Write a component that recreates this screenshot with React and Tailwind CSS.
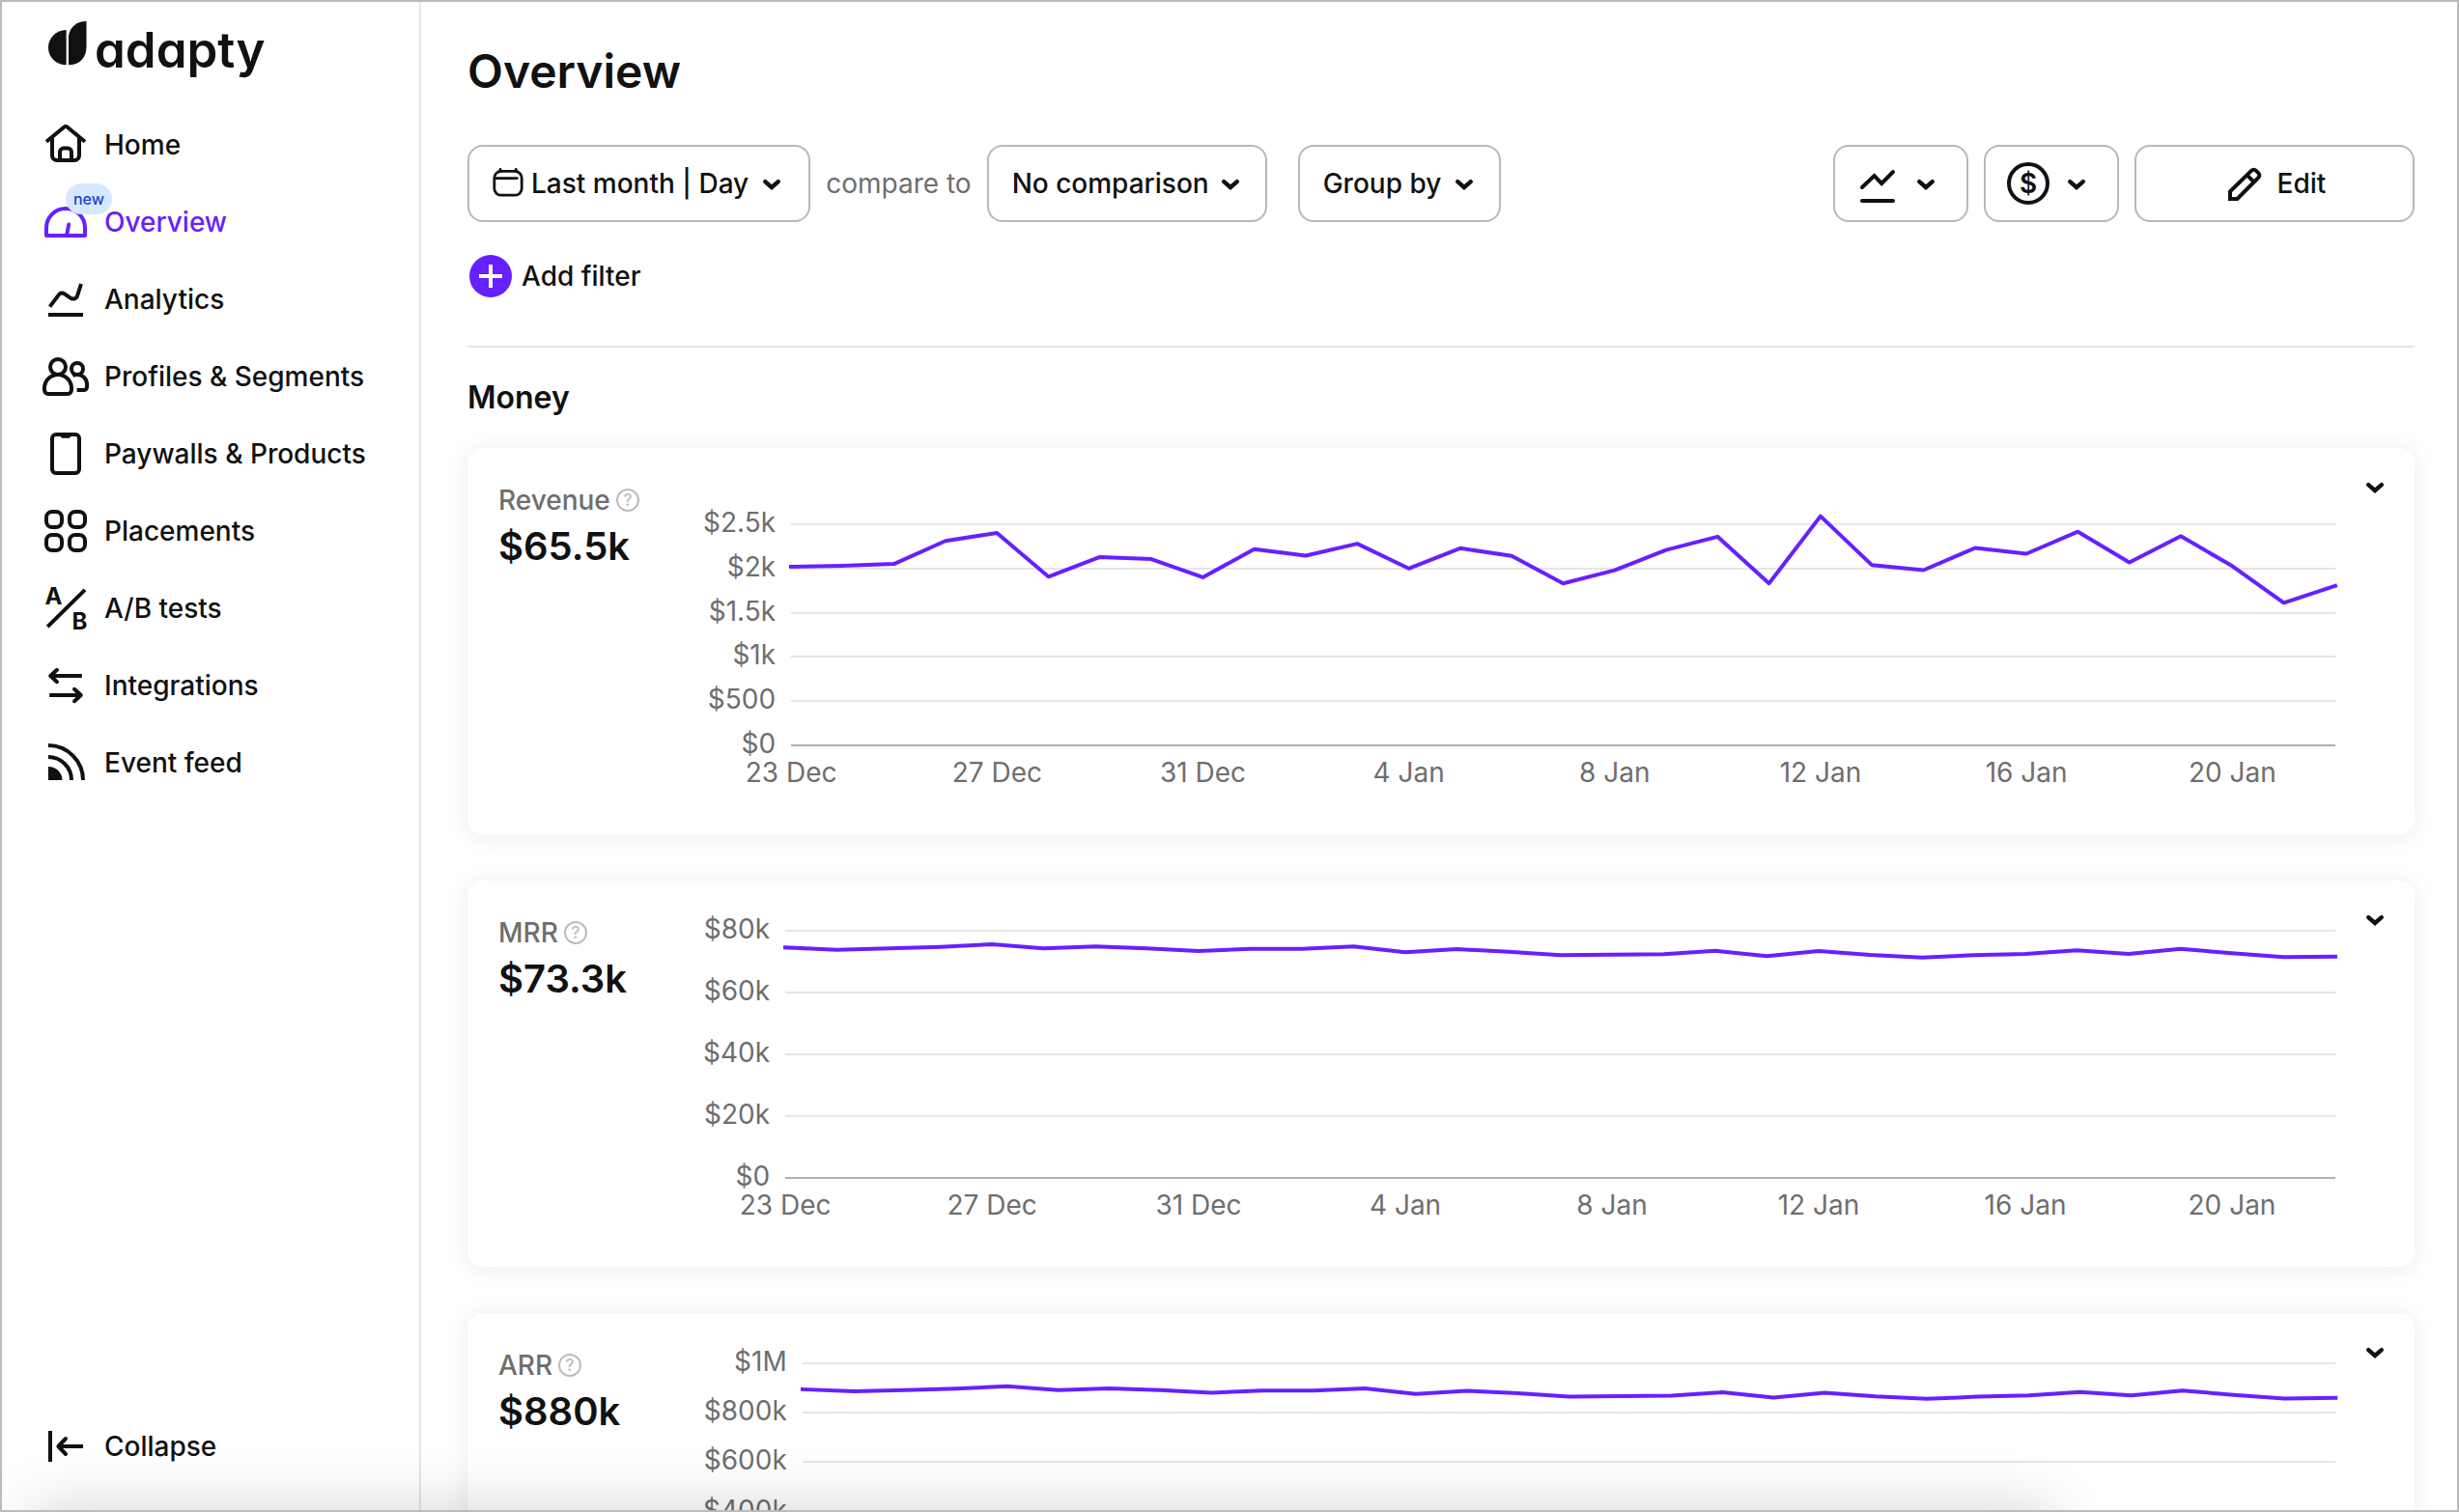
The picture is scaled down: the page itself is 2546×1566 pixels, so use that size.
const stroke = {
  fill: 'none',
  stroke: 'currentColor',
  strokeWidth: 2,
};

function NavIcon({ children }) {
  return (
    <svg viewBox="0 0 24 24" className="size-12 shrink-0 overflow-visible" aria-hidden="true" {...stroke}>
      {children}
    </svg>
  );
}

function HomeIcon() {
  return (
    <NavIcon>
      <path d="M2 10.4 11.1 2.9a1.4 1.4 0 0 1 1.8 0L22 10.4" />
      <path d="M5 8.5v9A2.5 2.5 0 0 0 7.5 20h9a2.5 2.5 0 0 0 2.5-2.5v-9" />
      <path d="M9 20v-4.2a2 2 0 0 1 2-2h2a2 2 0 0 1 2 2V20" />
    </NavIcon>
  );
}

function OverviewIcon() {
  return (
    <NavIcon>
      <path d="M2 19v-4a10 10 0 0 1 20 0v4z" strokeLinejoin="round" />
      <path d="M12.5 19 13.6 13.2" strokeLinecap="round" />
    </NavIcon>
  );
}

function AnalyticsIcon() {
  return (
    <NavIcon>
      <path d="M3.8 15.8 8.3 9.8c.8-1.1 2-1.4 3.1-.6l2.9 2c1.5 1.1 3.3.6 3.8-1.2L20 4" />
      <path d="M3 20h18" />
    </NavIcon>
  );
}

function ProfilesIcon() {
  return (
    <NavIcon>
      <circle cx="8" cy="7" r="4" />
      <path d="M1 19v-1a7 7 0 0 1 7-7 7 7 0 0 1 7 7v1a2 2 0 0 1-2 2H3a2 2 0 0 1-2-2z" />
      <circle cx="18" cy="8" r="3" />
      <path d="M15.6 11.5c.7-.4 1.6-.5 2.4-.5a5 5 0 0 1 5 5v1.4a1.6 1.6 0 0 1-1.6 1.6h-3.6" />
    </NavIcon>
  );
}

function PaywallsIcon() {
  return (
    <NavIcon>
      <rect x="5" y="2" width="14" height="20" rx="2" />
      <path d="M9.2 2.8h5.6l-.8 1.1h-4z" fill="currentColor" stroke="none" />
    </NavIcon>
  );
}

function PlacementsIcon() {
  return (
    <NavIcon>
      <rect x="2" y="2" width="8" height="8" rx="3" />
      <rect x="14" y="2" width="8" height="8" rx="3" />
      <rect x="2" y="14" width="8" height="8" rx="3" />
      <rect x="14" y="14" width="8" height="8" rx="3" />
    </NavIcon>
  );
}

function AbTestsIcon() {
  return (
    <NavIcon>
      <path d="M2.6 21.6 22 2.4" />
      <text x="1.2" y="10" fontSize="12" fontWeight="700" fill="currentColor" stroke="none">A</text>
      <text x="15.2" y="23" fontSize="12" fontWeight="700" fill="currentColor" stroke="none">B</text>
    </NavIcon>
  );
}

function IntegrationsIcon() {
  return (
    <NavIcon>
      <path d="M20.4 7H4.4" />
      <path d="M7.5 3.9 4.1 7l3.4 3.1" strokeLinecap="round" strokeLinejoin="round" />
      <path d="M3.6 17h16" />
      <path d="M16.5 13.9 19.9 17l-3.4 3.1" strokeLinecap="round" strokeLinejoin="round" />
    </NavIcon>
  );
}

function EventFeedIcon() {
  return (
    <NavIcon>
      <path d="M3 3a18 18 0 0 1 18 18" />
      <path d="M3 9a12 12 0 0 1 12 12" />
      <path d="M3 21v-7a7.2 7 0 0 1 7.2 7z" fill="currentColor" stroke="none" />
    </NavIcon>
  );
}

function CollapseIcon() {
  return (
    <NavIcon>
      <path d="M4 4v16M21 12H8.4" />
      <path d="M12 8 8.2 12l3.8 4" strokeLinecap="round" strokeLinejoin="round" />
    </NavIcon>
  );
}

function Chevron() {
  return (
    <svg
      viewBox="0 0 32 32"
      className="size-8 shrink-0"
      fill="none"
      stroke="currentColor"
      strokeWidth="4.4"
      strokeLinecap="round"
      aria-hidden="true"
    >
      <path d="M9.2 14.2 16 20l6.8-5.8" />
    </svg>
  );
}

function CalendarIcon() {
  return (
    <svg
      viewBox="0 0 36 36"
      className="size-9 shrink-0"
      fill="none"
      stroke="currentColor"
      strokeWidth="2.8"
      strokeLinecap="round"
      aria-hidden="true"
    >
      <rect x="3.8" y="5.4" width="28.4" height="24.8" rx="7" />
      <path d="M5 12.6h22.4M10 3.5v1.6M26.2 3.5v1.6" />
    </svg>
  );
}

function LineChartIcon() {
  return (
    <svg
      viewBox="0 0 24 24"
      className="size-12 shrink-0"
      fill="none"
      stroke="currentColor"
      strokeWidth="2"
      strokeLinecap="round"
      aria-hidden="true"
    >
      <path d="m4 14 6.3-6 3.8 4L20 6" />
      <path d="M4 21h16" />
    </svg>
  );
}

function DollarIcon() {
  return (
    <svg viewBox="0 0 48 48" className="size-12 shrink-0" aria-hidden="true">
      <circle cx="24" cy="24" r="20" fill="none" stroke="currentColor" strokeWidth="4" />
      <text x="24" y="34" fontSize="28" fontWeight="600" textAnchor="middle" fill="currentColor">$</text>
    </svg>
  );
}

function PencilIcon() {
  return (
    <svg
      viewBox="0 0 36 36"
      className="size-9 shrink-0"
      fill="none"
      stroke="currentColor"
      strokeWidth="4"
      aria-hidden="true"
    >
      <path d="M3 34v-7.6L25.2 4.6a3.2 3.2 0 0 1 4.5 0l2.7 2.7a3.2 3.2 0 0 1 0 4.5L10.4 34z" />
      <path d="m20.6 9.4 7.4 7.4" />
    </svg>
  );
}

function HelpIcon() {
  return (
    <svg viewBox="0 0 24 24" className="size-6 shrink-0 text-[#bdbdbd]" aria-hidden="true">
      <circle cx="12" cy="12" r="11" fill="none" stroke="currentColor" strokeWidth="2" />
      <text x="12" y="18" fontSize="17" fontWeight="500" textAnchor="middle" fill="currentColor">?</text>
    </svg>
  );
}

function Logo() {
  return (
    <a href="#home" className="flex items-start gap-2 pl-1.5 pt-5">
      <svg viewBox="0 0 40 46" className="h-[46px] w-10 shrink-0" fill="currentColor" aria-hidden="true">
        <path d="M18.6 9C8 9.4 0 17.2 0 27.2S8 45 18.6 45.3z" />
        <path d="M21 15C22.5 6 29.5 0 39.5 0v26.5C39.5 38 32 45.3 21 45.3z" />
      </svg>
      <span className="text-[51px] leading-[60px] font-semibold [font-feature-settings:'cv11']">adapty</span>
    </a>
  );
}

const navItems = [
  { label: 'Home', Icon: HomeIcon },
  { label: 'Overview', Icon: OverviewIcon, active: true, badge: 'new' },
  { label: 'Analytics', Icon: AnalyticsIcon },
  { label: 'Profiles & Segments', Icon: ProfilesIcon },
  { label: 'Paywalls & Products', Icon: PaywallsIcon },
  { label: 'Placements', Icon: PlacementsIcon },
  { label: 'A/B tests', Icon: AbTestsIcon },
  { label: 'Integrations', Icon: IntegrationsIcon },
  { label: 'Event feed', Icon: EventFeedIcon },
];

function Sidebar() {
  return (
    <aside className="flex w-[434px] shrink-0 flex-col border-r-2 border-[#e6e6e6] pl-[42px] pb-[26px]">
      <div className="h-[108px]">
        <Logo />
      </div>
      <nav className="flex flex-1 flex-col">
        {navItems.map(({ label, Icon, active, badge }) => (
          <a
            key={label}
            href={`#${label.toLowerCase().replace(/[^a-z]+/g, '-')}`}
            aria-current={active ? 'page' : undefined}
            className={`relative flex h-20 items-center gap-4 font-medium ${active ? 'text-[#6720ff]' : ''}`}
          >
            <Icon />
            {badge && (
              <span className="absolute left-6 top-0 flex h-8 w-12 items-center justify-center rounded-full bg-[#d6e8ff] text-base font-medium text-[#1c44c8]">
                {badge}
              </span>
            )}
            {label}
          </a>
        ))}
      </nav>
      <button type="button" className="flex h-20 items-center gap-4 font-medium">
        <CollapseIcon />
        Collapse
      </button>
    </aside>
  );
}

function ToolButton({ className = '', children, ...rest }) {
  return (
    <button
      type="button"
      className={`flex h-20 items-center rounded-2xl border-2 border-[#b8b8b8] bg-white font-medium whitespace-nowrap ${className}`}
      {...rest}
    >
      {children}
    </button>
  );
}

function Toolbar() {
  return (
    <div className="mt-12 flex items-center justify-between">
      <div className="flex items-center">
        <ToolButton className="px-[22px]">
          <CalendarIcon />
          <span className="ml-1.5 mr-2">Last month | Day</span>
          <Chevron />
        </ToolButton>
        <span className="mx-4 text-[#6e6e6e]">compare to</span>
        <ToolButton className="gap-1.5 pl-6 pr-5">
          No comparison
          <Chevron />
        </ToolButton>
        <ToolButton className="ml-8 gap-2 pl-6 pr-5">
          Group by
          <Chevron />
        </ToolButton>
      </div>
      <div className="flex gap-4">
        <ToolButton className="w-[140px] gap-2.5 pl-5" aria-label="Chart type">
          <LineChartIcon />
          <Chevron />
        </ToolButton>
        <ToolButton className="w-[140px] gap-2.5 pl-5" aria-label="Currency">
          <DollarIcon />
          <Chevron />
        </ToolButton>
        <ToolButton className="w-[290px] justify-center gap-4 pl-1">
          <PencilIcon />
          Edit
        </ToolButton>
      </div>
    </div>
  );
}

const DAYS = 30;
const dateLabels = ['23 Dec', '27 Dec', '31 Dec', '4 Jan', '8 Jan', '12 Jan', '16 Jan', '20 Jan'];

const revenue = [
  2020, 2031, 2052, 2312, 2403, 1907, 2130, 2107, 1901, 2218, 2145, 2280, 2000, 2229, 2143, 1832,
  1980, 2209, 2360, 1832, 2592, 2038, 1982, 2232, 2167, 2416, 2069, 2367, 2027, 1612, 1805,
];

const mrr = [
  74580, 73860, 74270, 74790, 75620, 74270, 74900, 74270, 73440, 74170, 74170, 74900, 73020, 74060,
  73230, 72080, 72290, 72400, 73540, 71770, 73440, 72190, 71350, 72080, 72500, 73650, 72500, 74170,
  72700, 71460, 71670,
];

const charts = [
  {
    title: 'Revenue',
    total: '$65.5k',
    ticks: ['$2.5k', '$2k', '$1.5k', '$1k', '$500', '$0'],
    topTick: 2500,
    max: 2795,
    values: revenue,
  },
  {
    title: 'MRR',
    total: '$73.3k',
    ticks: ['$80k', '$60k', '$40k', '$20k', '$0'],
    topTick: 80000,
    max: 80000,
    values: mrr,
  },
  {
    title: 'ARR',
    total: '$880k',
    ticks: ['$1M', '$800k', '$600k', '$400k', '$200k', '$0'],
    topTick: 1000000,
    max: 1000000,
    values: mrr.map((v) => v * 12),
  },
];

function Chart({ ticks, topTick, max, values, title }) {
  const tickShare = topTick / max;
  const points = values.map((v, i) => `${i},${(1 - v / max) * 100}`).join(' ');
  return (
    <div className="flex flex-1 gap-4 text-[#6e6e6e]">
      <div className="flex h-64 flex-col justify-end">
        <div className="flex flex-col justify-between" style={{ height: `${tickShare * 100}%` }}>
          {ticks.map((t) => (
            <div key={t} className="flex h-0 items-center justify-end">
              <span className="pb-1">{t}</span>
            </div>
          ))}
        </div>
      </div>
      <div className="flex-1">
        <svg className="block h-64 w-full overflow-visible" role="img" aria-label={`${title} chart`}>
          {ticks.map((t, i) => {
            const y = `${(1 - tickShare + (tickShare * i) / (ticks.length - 1)) * 100}%`;
            return (
              <line
                key={t}
                x1="0"
                x2="100%"
                y1={y}
                y2={y}
                stroke={i === ticks.length - 1 ? '#b0b0b0' : '#e6e6e6'}
                strokeWidth="2"
                shapeRendering="crispEdges"
              />
            );
          })}
          <svg viewBox={`0 0 ${DAYS} 100`} width="100%" height="100%" preserveAspectRatio="none" overflow="visible">
            <polyline
              points={points}
              fill="none"
              stroke="#6720ff"
              strokeWidth="4"
              strokeLinejoin="round"
              strokeLinecap="square"
              vectorEffect="non-scaling-stroke"
            />
          </svg>
        </svg>
        <div className="mt-2 flex justify-between" style={{ width: `${(28 / DAYS) * 100}%` }}>
          {dateLabels.map((d) => (
            <span key={d} className="flex w-0 justify-center whitespace-nowrap">
              {d}
            </span>
          ))}
        </div>
      </div>
    </div>
  );
}

function ChartCard(props) {
  return (
    <article className="relative flex h-[400px] shrink-0 rounded-2xl bg-white pl-8 pr-[82px] pt-[52px] shadow-[0_2px_24px_rgba(30,30,60,0.09)]">
      <div className="-mt-[18px] w-[212px] shrink-0">
        <h3 className="flex items-center gap-1.5 leading-10 font-medium text-[#6e6e6e]">
          {props.title}
          <HelpIcon />
        </h3>
        <p className="text-[40px] leading-[56px] font-semibold">{props.total}</p>
      </div>
      <Chart {...props} />
      <button type="button" aria-label={`${props.title} options`} className="absolute right-[25px] top-6">
        <Chevron />
      </button>
    </article>
  );
}

export default function App() {
  return (
    <div className="relative flex h-screen overflow-hidden border-2 border-[#bbbbbb] bg-white font-['Inter',sans-serif] text-[28px] leading-10 text-[#111111]">
      <Sidebar />
      <main className="flex min-w-0 flex-1 flex-col overflow-hidden pl-12 pr-11 pt-11">
        <h1 className="text-5xl leading-[56px] font-semibold">Overview</h1>
        <Toolbar />
        <div className="mt-8 flex">
          <button type="button" className="flex h-12 items-center gap-2.5 pl-0.5 font-medium">
            <svg viewBox="0 0 44 44" className="size-11" aria-hidden="true">
              <circle cx="22" cy="22" r="22" fill="#6720ff" />
              <path d="M22 10v24M10 22h24" stroke="#fff" strokeWidth="4" />
            </svg>
            Add filter
          </button>
        </div>
        <hr className="mt-12 border-t-2 border-[#e6e6e6]" />
        <h2 className="mt-8 text-[32px] leading-10 font-semibold">Money</h2>
        <section className="mt-8 flex flex-col gap-12">
          {charts.map((c) => (
            <ChartCard key={c.title} {...c} />
          ))}
        </section>
      </main>
      <div className="pointer-events-none absolute left-8 right-[420px] top-full h-32 shadow-[0_0_64px_rgba(0,0,0,0.18)]" />
    </div>
  );
}
